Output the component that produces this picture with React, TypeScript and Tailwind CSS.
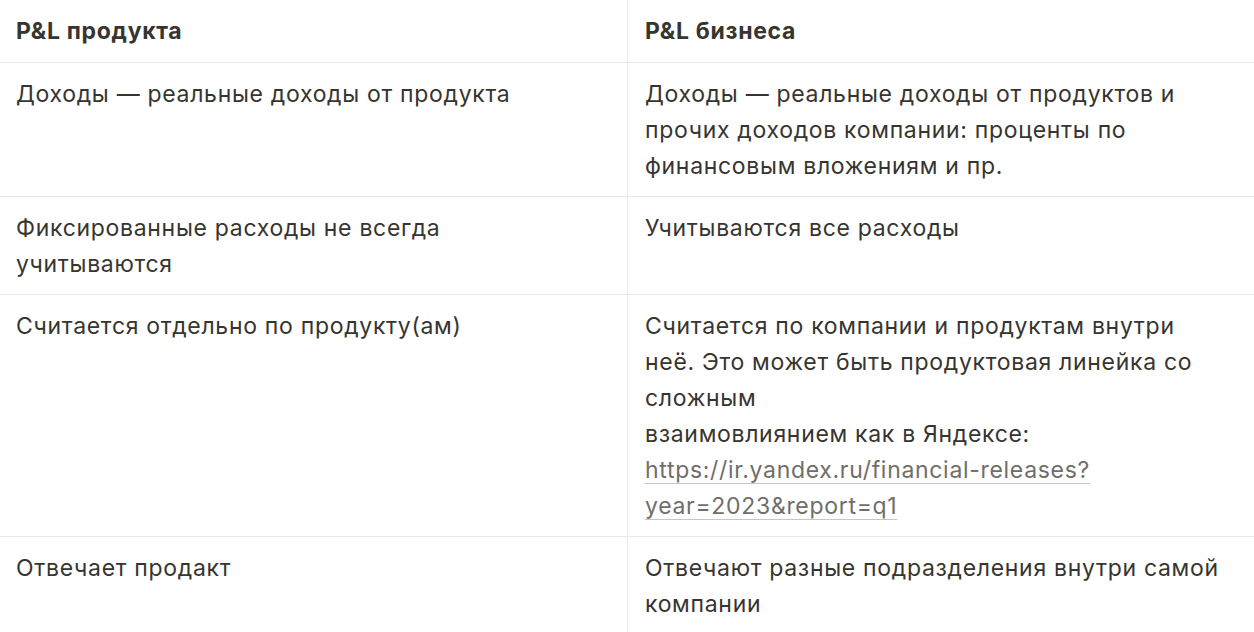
import React from 'react';

const ROWS: { left: React.ReactNode; right: React.ReactNode }[] = [
  {
    left: 'Доходы — реальные доходы от продукта',
    right: 'Доходы — реальные доходы от продуктов и прочих доходов компании: проценты по финансовым вложениям и пр.',
  },
  {
    left: 'Фиксированные расходы не всегда учитываются',
    right: 'Учитываются все расходы',
  },
  {
    left: 'Считается отдельно по продукту(ам)',
    right: (
      <>
        Считается по компании и продуктам внутри неё. Это может быть продуктовая линейка со сложным
        <br />
        взаимовлиянием как в Яндексе:{' '}
        <a
          href="#"
          className="text-[#6f6e69] underline decoration-[#c7c6c2] decoration-1 underline-offset-[5px]"
        >
          https://ir.yandex.ru/financial-releases?year=2023&amp;report=q1
        </a>
      </>
    ),
  },
  {
    left: 'Отвечает продакт',
    right: 'Отвечают разные подразделения внутри самой компании',
  },
];

export default function App() {
  return (
    <div className="w-[1254px] h-[632px] overflow-hidden bg-white text-[#37352f] font-['Inter','Noto_Sans',sans-serif] text-[23px] tracking-[0.03em] leading-[36px]">
      <div className="grid grid-cols-[627px_627px]">
        <div className="pl-4 pr-8 pt-[13px] pb-[13px] font-bold border-b border-[#e9e9e7]">P&amp;L продукта</div>
        <div className="pl-[17px] pr-[30px] pt-[13px] pb-[13px] font-bold border-b border-l border-[#e9e9e7]">P&amp;L бизнеса</div>
        {ROWS.map((row, i) => (
          <React.Fragment key={i}>
            <div className="pl-4 pr-8 pt-[13px] pb-3 border-b border-[#e9e9e7]">{row.left}</div>
            <div className="pl-[17px] pr-[30px] pt-[13px] pb-3 border-b border-l border-[#e9e9e7] break-words">{row.right}</div>
          </React.Fragment>
        ))}
      </div>
    </div>
  );
}
